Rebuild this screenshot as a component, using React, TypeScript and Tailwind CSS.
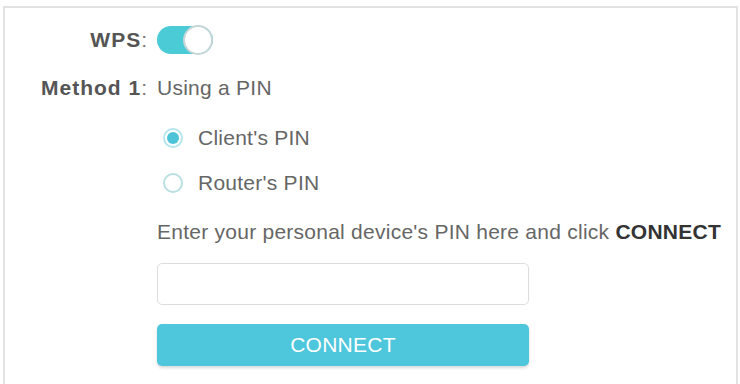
import { useState } from "react";

const Toggle = ({ on, onChange }: { on: boolean; onChange: (v: boolean) => void }) => (
  <button
    type="button"
    onClick={() => onChange(!on)}
    className={`flex h-[28px] w-[56px] items-center rounded-full p-0 ${on ? "justify-end bg-[#4acbd6]" : "justify-start bg-[#d5d5d5]"}`}
  >
    <span className="h-[30px] w-[30px] rounded-full border-2 border-[#c5d6d8] bg-white" />
  </button>
);

const Radio = ({ checked, label, onSelect }: { checked: boolean; label: string; onSelect: () => void }) => (
  <label className="flex h-[24px] cursor-pointer items-center gap-[15px]" onClick={onSelect}>
    <span
      className={`ml-[6px] flex h-[20px] w-[20px] items-center justify-center rounded-full border-2 ${checked ? "border-[#b5e6ec]" : "border-[#b9dfe3]"}`}
    >
      {checked && <span className="h-[12px] w-[12px] rounded-full bg-[#4cc3d6]" />}
    </span>
    <span>{label}</span>
  </label>
);

const Row = ({ label, className, children }: { label?: string; className: string; children: React.ReactNode }) => (
  <div className={`flex items-center gap-[9px] ${className}`}>
    <div className="w-[143px] shrink-0 text-right font-bold tracking-[1px] text-[#555]">
      {label && (
        <>
          {label}
          <span className="font-normal text-[#777]">:</span>
        </>
      )}
    </div>
    <div>{children}</div>
  </div>
);

export default function App() {
  const [wps, setWps] = useState(true);
  const [method, setMethod] = useState<"client" | "router">("client");
  const [pin, setPin] = useState("");

  return (
    <div
      className="h-[384px] w-[740px] bg-white pl-[3px] pr-[2px] pt-[6px] text-[21px] tracking-[0.25px] text-[#666]"
      style={{ fontFamily: '"Liberation Sans", Arial, sans-serif' }}
    >
      <div className="h-[378px] border-l-2 border-r-2 border-t-2 border-[#e2e2e2]">
        <Row label="WPS" className="mt-[16px] h-[32px]">
          <Toggle on={wps} onChange={setWps} />
        </Row>

        <Row label="Method 1" className="mt-[20px] h-[24px]">
          Using a PIN
        </Row>

        <Row className="mt-[26px]">
          <div className="flex flex-col gap-[21px]">
            <Radio checked={method === "client"} label="Client's PIN" onSelect={() => setMethod("client")} />
            <Radio checked={method === "router"} label="Router's PIN" onSelect={() => setMethod("router")} />
          </div>
        </Row>

        <Row className="mt-[25px] h-[24px]">
          <span className="whitespace-nowrap">
            Enter your personal device's PIN here and click <b className="text-[#333]">CONNECT</b>
          </span>
        </Row>

        <Row className="mt-[19px]">
          <div className="w-[372px]">
            <input
              value={pin}
              onChange={(e) => setPin(e.target.value)}
              className="block h-[42px] w-full rounded-[5px] border border-[#ddd] px-3 outline-none"
            />
            <button
              type="button"
              className="mt-[19px] block h-[42px] w-full rounded-[5px] bg-[#4ec6dc] text-white shadow-[0_2px_3px_rgba(0,0,0,0.15)]"
            >
              CONNECT
            </button>
          </div>
        </Row>
      </div>
    </div>
  );
}
